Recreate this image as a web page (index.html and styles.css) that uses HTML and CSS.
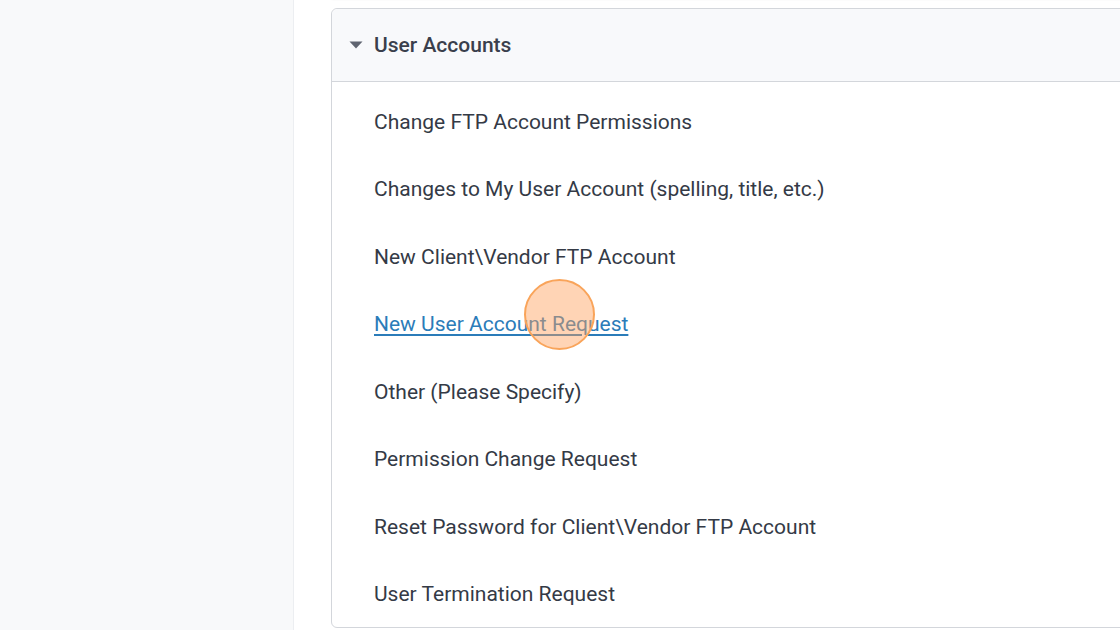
FILE: index.html
```html
<!DOCTYPE html>
<html>
<head>
<meta charset="utf-8">
<link rel="stylesheet" href="styles.css">
</head>
<body>
<div class="page">
  <aside class="side"></aside>
  <main class="main">
    <div class="prev-card"></div>
    <section class="card">
      <header class="card-head">
        <svg class="caret" width="14" height="8" viewBox="0 0 14 8"><path d="M0.5 0.5 H13.5 L7 7.5 Z" fill="#5f6470"/></svg>
        <span class="title">User Accounts</span>
      </header>
      <ul class="list">
        <li class="item">Change FTP Account Permissions</li>
        <li class="item">Changes to My User Account (spelling, title, etc.)</li>
        <li class="item">New Client\Vendor FTP Account</li>
        <li class="item"><a class="link" href="#">New User Account Request</a><span class="click"></span></li>
        <li class="item">Other (Please Specify)</li>
        <li class="item">Permission Change Request</li>
        <li class="item">Reset Password for Client\Vendor FTP Account</li>
        <li class="item">User Termination Request</li>
      </ul>
    </section>
  </main>
</div>
</body>
</html>
```
FILE: styles.css
```css
* { box-sizing: border-box; }
html, body { margin: 0; padding: 0; }
body {
  width: 1120px;
  height: 630px;
  overflow: hidden;
  font-family: Roboto, "Liberation Sans", sans-serif;
  background: #ffffff;
}
.page {
  display: flex;
  height: 630px;
}
.side {
  width: 294px;
  flex: none;
  background: #f8f9fa;
  border-right: 1px solid #eceef1;
  box-shadow: 1px 0 2px rgba(0,0,0,0.03);
}
.main {
  flex: 1;
  background: #fff;
  padding-left: 37px;
  position: relative;
}
.prev-card {
  height: 3px;
  margin-top: -4px;
  border: 1px solid #dcdfe3;
  border-top: none;
  border-radius: 0 0 6px 6px;
  box-shadow: 0 1px 2px rgba(0,0,0,0.06);
  margin-right: -20px;
}
.card {
  margin-top: 9px;
  margin-right: -20px;
  border: 1px solid #d3d6db;
  border-radius: 6px;
  height: 620px;
}
.card-head {
  height: 73px;
  display: flex;
  align-items: center;
  padding-left: 17px;
  background: #f8f9fb;
  border-bottom: 1px solid #d3d6db;
  border-radius: 6px 6px 0 0;
}
.caret {
  display: block;
  margin-right: 11px;
}
.title {
  font-size: 21px;
  font-weight: 500;
  color: #3a3f4c;
}
.list {
  list-style: none;
  margin: 0;
  padding: 6px 0 0 42px;
}
.item {
  height: 67.5px;
  display: flex;
  align-items: center;
  font-size: 21px;
  color: #343a46;
  position: relative;
}
.link {
  color: #2b7cb9;
  text-decoration: underline;
  text-underline-offset: 3px;
  text-decoration-thickness: 1.5px;
}
.click {
  position: absolute;
  left: 150px;
  top: -12px;
  width: 71px;
  height: 71px;
  border-radius: 50%;
  background: rgba(255, 160, 90, 0.45);
  border: 2px solid #f9a45a;
}
```
